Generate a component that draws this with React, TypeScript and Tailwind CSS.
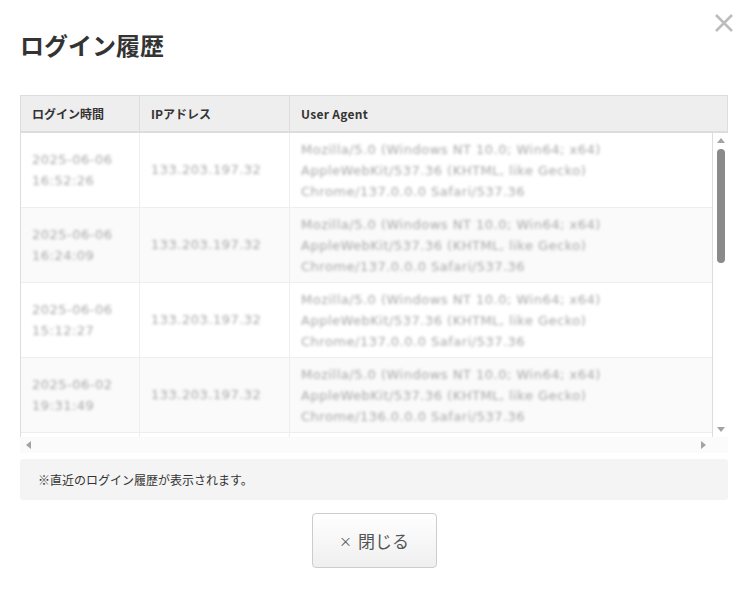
import React from 'react';

// ログイン履歴モーダル
const rows = [
  { date: '2025-06-06', time: '16:52:26', ip: '133.203.197.32', chrome: '137.0.0.0' },
  { date: '2025-06-06', time: '16:24:09', ip: '133.203.197.32', chrome: '137.0.0.0' },
  { date: '2025-06-06', time: '15:12:27', ip: '133.203.197.32', chrome: '137.0.0.0' },
  { date: '2025-06-02', time: '19:31:49', ip: '133.203.197.32', chrome: '136.0.0.0' },
];

const Arrow: React.FC<{ dir: 'up' | 'down' | 'left' | 'right' }> = ({ dir }) => {
  const pts = {
    up: '1,7 5,2 9,7',
    down: '1,3 5,8 9,3',
    left: '7,1 2,5 7,9',
    right: '3,1 8,5 3,9',
  }[dir];
  return (
    <svg width="10" height="10" viewBox="0 0 10 10">
      <polygon points={pts} fill="#a3a3a3" />
    </svg>
  );
};

const cellText = 'text-[13px] tracking-[0.5px] text-[#a8a8a8] [filter:blur(1.5px)] [font-family:"DejaVu_Sans",sans-serif]';

const App: React.FC = () => {
  return (
    <div className="w-[749px] h-[593px] bg-white relative text-[#333]" style={{ fontFamily: '"Noto Sans CJK JP", "Noto Sans", sans-serif' }}>
      <button className="absolute right-[14px] top-[12px] w-[22px] h-[22px] flex items-center justify-center">
        <svg width="20" height="20" viewBox="0 0 20 20">
          <path d="M2 2 L18 18 M18 2 L2 18" stroke="#bdbdbd" strokeWidth="2.6" />
        </svg>
      </button>

      <div className="px-5 pt-[28px]">
        <h2 className="text-[24px] font-bold leading-[34px]">ログイン履歴</h2>

        <div className="mt-[33px] w-[708px]">
          {/* header */}
          <div className="flex h-[38px] bg-[#eeeeee] border border-[#dddddd] border-b-2 text-[12px] font-semibold">
            <div className="w-[119px] pl-[11px] flex items-center border-r border-[#dddddd]">ログイン時間</div>
            <div className="w-[150px] pl-[11px] flex items-center border-r border-[#dddddd]">IPアドレス</div>
            <div className="flex-1 pl-[11px] flex items-center tracking-[0.3px]">User Agent</div>
          </div>

          {/* body */}
          <div className="flex h-[304px]">
            <div className="w-[693px] overflow-hidden border-l border-r border-[#dddddd]">
              {rows.map((r, i) => (
                <div
                  key={i}
                  className={`flex h-[75px] border-b border-[#eeeeee] ${i % 2 === 1 ? 'bg-[#fafafa]' : 'bg-white'}`}
                >
                  <div className="w-[119px] pl-[11px] flex items-center border-r border-[#eeeeee]">
                    <div className={`${cellText} leading-[21px]`}>
                      {r.date}
                      <br />
                      {r.time}
                    </div>
                  </div>
                  <div className="w-[150px] pl-[11px] flex items-center border-r border-[#eeeeee]">
                    <div className={cellText}>{r.ip}</div>
                  </div>
                  <div className="flex-1 pl-[11px] flex items-center">
                    <div className={`${cellText} leading-[21px] whitespace-nowrap`}>
                      Mozilla/5.0 (Windows NT 10.0; Win64; x64)
                      <br />
                      AppleWebKit/537.36 (KHTML, like Gecko)
                      <br />
                      Chrome/{r.chrome} Safari/537.36
                    </div>
                  </div>
                </div>
              ))}
              {/* 次の行の上端だけが見えている */}
              <div className="flex h-[4px] bg-white">
                <div className="w-[119px] border-r border-[#eeeeee]" />
                <div className="w-[150px] border-r border-[#eeeeee]" />
                <div className="flex-1" />
              </div>
            </div>
            {/* vertical scrollbar */}
            <div className="w-[15px] bg-white flex flex-col items-center">
              <div className="h-[16px] flex items-center justify-center"><Arrow dir="up" /></div>
              <div className="w-[8px] h-[114px] rounded-full bg-[#8a8a8a]" />
              <div className="flex-1" />
              <div className="h-[16px] flex items-center justify-center"><Arrow dir="down" /></div>
            </div>
          </div>

          {/* horizontal scrollbar */}
          <div className="flex h-[16px] bg-[#fbfbfb]">
            <div className="flex-1 flex items-center justify-between px-[4px]">
              <Arrow dir="left" />
              <Arrow dir="right" />
            </div>
            <div className="w-[16px]" />
          </div>
        </div>

        <div className="mt-[6px] w-[708px] h-[41px] bg-[#f4f4f4] rounded-[3px] flex items-center pl-[18px] text-[12px]">
          ※直近のログイン履歴が表示されます。
        </div>

        <div className="w-[708px] flex justify-center mt-[13px]">
          <button className="w-[125px] h-[55px] border border-[#cccccc] rounded-[4px] bg-gradient-to-b from-white to-[#efefef] text-[17px] text-[#555] flex items-center justify-center gap-[6px]">
            <span className="text-[13px]">×</span>
            <span>閉じる</span>
          </button>
        </div>
      </div>
    </div>
  );
};

export default App;
